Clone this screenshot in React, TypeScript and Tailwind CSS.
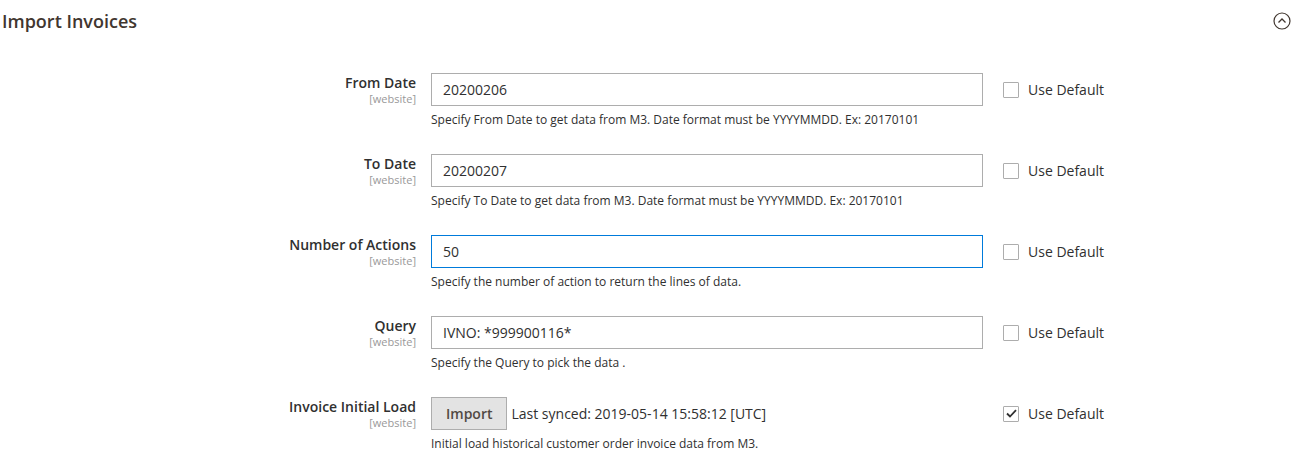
import React from 'react';

type Field = {
    label: string;
    value?: string;
    note: string;
    focused?: boolean;
    checked?: boolean;
    button?: boolean;
};

const fields: Field[] = [
    { label: 'From Date', value: '20200206', note: 'Specify From Date to get data from M3. Date format must be YYYYMMDD. Ex: 20170101' },
    { label: 'To Date', value: '20200207', note: 'Specify To Date to get data from M3. Date format must be YYYYMMDD. Ex: 20170101' },
    { label: 'Number of Actions', value: '50', note: 'Specify the number of action to return the lines of data.', focused: true },
    { label: 'Query', value: 'IVNO: *999900116*', note: 'Specify the Query to pick the data .' },
    { label: 'Invoice Initial Load', note: 'Initial load historical customer order invoice data from M3.', checked: true, button: true },
];

function Checkbox({ checked }: { checked?: boolean }) {
    return (
        <span className="w-[16px] h-[16px] border border-[#adadad] bg-white flex items-center justify-center rounded-[1px]">
            {checked && (
                <svg width="11" height="9" viewBox="0 0 11 9" fill="none">
                    <path d="M1 4.5 L4 7.5 L10 1.2" stroke="#303030" strokeWidth="1.8" />
                </svg>
            )}
        </span>
    );
}

function Row({ field }: { field: Field }) {
    return (
        <div className="flex h-[81px]">
            <div className="w-[416px] pt-[1px] text-right flex flex-col">
                <span className="text-[14px] leading-[18px] font-semibold text-[#303030]">{field.label}</span>
                <span className="text-[11px] leading-[13px] text-[#999999]">[website]</span>
            </div>
            <div className="ml-[15px] w-[552px] flex flex-col">
                {field.button ? (
                    <div className="flex items-center h-[33px]">
                        <button className="h-[33px] px-[14px] bg-[#e3e3e3] border border-[#adadad] text-[14px] font-semibold text-[#514943]">
                            Import
                        </button>
                        <span className="ml-[4px] text-[14px] text-[#303030]">Last synced: 2019-05-14 15:58:12 [UTC]</span>
                    </div>
                ) : (
                    <div
                        className={`h-[33px] border ${field.focused ? 'border-[#007bdb]' : 'border-[#adadad]'} px-[11px] flex items-center text-[14px] text-[#303030]`}
                    >
                        {field.value}
                    </div>
                )}
                <p className="mt-[5px] text-[12px] leading-[18px] text-[#303030]">{field.note}</p>
            </div>
            <div className="ml-[20px] h-[33px] flex items-center gap-[9px]">
                <Checkbox checked={field.checked} />
                <span className="text-[14px] text-[#303030]">Use Default</span>
            </div>
        </div>
    );
}

export default function App() {
    return (
        <div className="w-[1314px] h-[473px] bg-white font-['Open_Sans',sans-serif]">
            <div className="h-[42px] flex items-center justify-between pl-[2px] pr-[23px]">
                <h2 className="text-[18px] font-semibold text-[#41362f]">Import Invoices</h2>
                <svg width="18" height="18" viewBox="0 0 18 18" fill="none">
                    <circle cx="9" cy="9" r="8" stroke="#41362f" strokeWidth="1.2" />
                    <path d="M5.5 10.5 L9 7 L12.5 10.5" stroke="#41362f" strokeWidth="1.3" />
                </svg>
            </div>
            <div className="mt-[31px] flex flex-col">
                {fields.map((f) => (
                    <Row key={f.label} field={f} />
                ))}
            </div>
        </div>
    );
}
